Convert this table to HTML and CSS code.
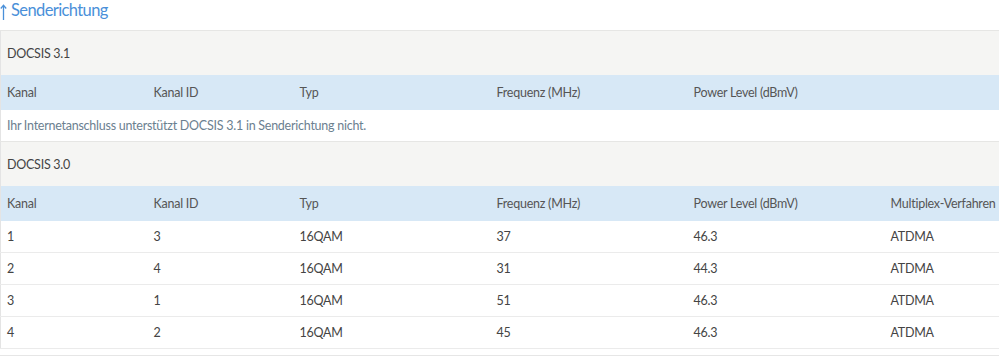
FILE: index.html
```html
<!DOCTYPE html>
<html lang="de">
<head>
<meta charset="utf-8">
<title>Senderichtung</title>
<link rel="stylesheet" href="styles.css">
</head>
<body>
<h2 class="title"><svg class="arrow" width="7" height="16" viewBox="0 0 7 16" aria-hidden="true"><path d="M3.5 16V1.5M0.8 4.5L3.5 1.2L6.2 4.5" fill="none" stroke="#4a90d9" stroke-width="1.3"/></svg><span class="label">Senderichtung</span></h2>
<table class="grid">
  <colgroup>
    <col class="c1"><col class="c2"><col class="c3"><col class="c4"><col class="c5"><col class="c6">
  </colgroup>
  <tbody>
    <tr class="group"><td colspan="6">DOCSIS 3.1</td></tr>
    <tr class="head"><td>Kanal</td><td>Kanal ID</td><td>Typ</td><td>Frequenz (MHz)</td><td>Power Level (dBmV)</td><td></td></tr>
    <tr class="msg"><td colspan="6">Ihr Internetanschluss unterstützt DOCSIS 3.1 in Senderichtung nicht.</td></tr>
    <tr class="group"><td colspan="6">DOCSIS 3.0</td></tr>
    <tr class="head"><td>Kanal</td><td>Kanal ID</td><td>Typ</td><td>Frequenz (MHz)</td><td>Power Level (dBmV)</td><td>Multiplex-Verfahren</td></tr>
    <tr class="row"><td>1</td><td>3</td><td>16QAM</td><td>37</td><td>46.3</td><td>ATDMA</td></tr>
    <tr class="row"><td>2</td><td>4</td><td>16QAM</td><td>31</td><td>44.3</td><td>ATDMA</td></tr>
    <tr class="row"><td>3</td><td>1</td><td>16QAM</td><td>51</td><td>46.3</td><td>ATDMA</td></tr>
    <tr class="row"><td>4</td><td>2</td><td>16QAM</td><td>45</td><td>46.3</td><td>ATDMA</td></tr>
  </tbody>
</table>
<div class="after"></div>
</body>
</html>
```
FILE: styles.css
```css
html, body {
  margin: 0;
  padding: 0;
  background: #ffffff;
}
body {
  font-family: Lato, "Open Sans", "Liberation Sans", sans-serif;
  color: #4f4f4f;
  font-size: 12.5px;
  letter-spacing: -0.25px;
}
.title {
  margin: 0;
  height: 30px;
  box-sizing: border-box;
  padding-top: 1px;
  font-size: 16.5px;
  font-weight: normal;
  line-height: 19px;
  letter-spacing: -0.6px;
  color: #4a90d9;
  display: flex;
  align-items: flex-start;
  gap: 4px;
}
.arrow {
  margin-top: 3px;
  flex: none;
}
.grid {
  width: 100%;
  border-collapse: collapse;
  table-layout: fixed;
  border-left: 1px solid #e4e4e4;
}
.c1 { width: 147px; }
.c2 { width: 146px; }
.c3 { width: 197px; }
.c4 { width: 197px; }
.c5 { width: 197px; }
.grid td {
  padding: 0 0 0 6px;
  white-space: nowrap;
  overflow: visible;
}
.group td {
  background: #f5f5f3;
  border-top: 1px solid #e6e6e4;
  height: 44px;
  color: #444;
}
.head td {
  background: #d7e8f6;
  height: 35px;
  color: #555;
}
.msg td {
  height: 31px;
  color: #6b8090;
}
.row td {
  height: 31px;
  border-bottom: 1px solid #ebebeb;
  color: #444;
}
.after {
  margin-top: 6px;
  border-top: 1px solid #e6e6e6;
  height: 2px;
}
```
